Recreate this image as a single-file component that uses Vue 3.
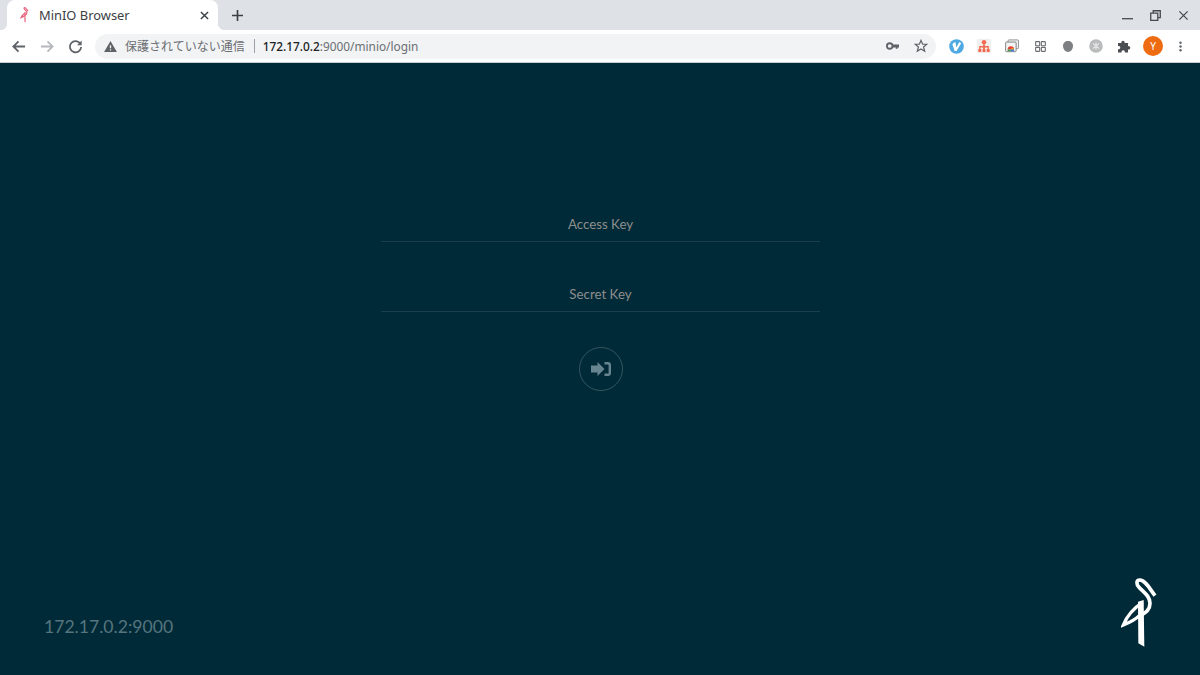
<script setup>
const ui = {
  title: 'MinIO Browser',
  warning: '保護されていない通信',
  host: '172.17.0.2',
  path: ':9000/minio/login',
  endpoint: '172.17.0.2:9000',
}
</script>

<template>
  <div class="screen">
    <header class="tabstrip">
      <div class="tab">
        <svg class="favicon" viewBox="63 36 108 216" fill="none" stroke="#e8647f">
          <path d="M165 92C150 72 135 45 120 45C108 45 108 58 118 68C135 85 150 95 150 115C150 135 138 145 118 152" stroke-width="16" />
          <path d="M128 112C100 130 80 155 70 180C90 172 108 162 118 152" stroke-width="16" />
          <path d="M115 110L131 105L133 245L116 235Z" fill="#e8647f" stroke="none" />
        </svg>
        <span class="tab-title">{{ ui.title }}</span>
        <svg class="tab-close" viewBox="0 0 10 10"><path d="M1 1L9 9M9 1L1 9" /></svg>
      </div>
      <svg class="newtab" viewBox="0 0 12 12"><path d="M6 0V12M0 6H12" /></svg>
      <div class="window-controls">
        <span class="wc"><svg viewBox="0 0 12 12"><path d="M0 9.5H12" /></svg></span>
        <span class="wc"><svg viewBox="0 0 12 12"><path d="M3.5 3V.8H11.2V8.2H9M.8 3.5H8.5V11.2H.8Z" /></svg></span>
        <span class="wc"><svg viewBox="0 0 12 12"><path d="M1.5 1.5L10.5 10.5M10.5 1.5L1.5 10.5" /></svg></span>
      </div>
    </header>

    <nav class="toolbar">
      <span class="btn"><svg class="ico back" viewBox="0 0 16 16"><path d="M15 8H2.5M8 2.5L2.5 8L8 13.5" /></svg></span>
      <span class="btn"><svg class="ico faded" viewBox="0 0 16 16"><path d="M1 8H13.5M8 2.5L13.5 8L8 13.5" /></svg></span>
      <span class="btn"><svg class="ico" viewBox="0 0 16 16"><path d="M13.2 5.2A6 6 0 1 0 14 8.5" /><path class="solid" d="M14.6 1.6V6.6H9.6Z" /></svg></span>

      <div class="omnibox">
        <svg class="warn" viewBox="0 0 14 12"><path d="M7 0L14 12H0ZM6.3 4.5V8H7.7V4.5ZM6.3 9V10.4H7.7V9Z" fill-rule="evenodd" /></svg>
        <span class="warn-text">{{ ui.warning }}</span>
        <span class="sep"></span>
        <span class="url"><b>{{ ui.host }}</b>{{ ui.path }}</span>
        <svg class="keyicon" viewBox="0 0 14 8"><path d="M7 2.5H14V5.5H12.5V7H10.5V5.5H7Z" /><circle cx="4" cy="4" r="3" fill="none" stroke="#5f6368" stroke-width="2" /></svg>
        <svg class="star" viewBox="0 0 16 16"><path d="M8 1.6L9.9 6H14.7L10.9 9.1L12.2 14L8 11.3L3.8 14L5.1 9.1L1.3 6H6.1Z" /></svg>
      </div>

      <span class="btn first-ext">
        <svg class="ext big" viewBox="0 0 16 16"><circle cx="8" cy="8" r="7.8" fill="#4ea9e2" /><path d="M3.6 5.6Q5 3.4 7 3.6L7.8 9L11 3.2L13 4.4L8 12.8H6Z" fill="#fff" /></svg>
      </span>
      <span class="btn">
        <svg class="ext" viewBox="0 0 16 16"><rect width="16" height="16" fill="#f3eeee" rx="1" /><circle cx="8" cy="3.8" r="2.6" fill="#f26a4f" /><path d="M7 6H9V8H13.5V12H12V9.8H9V12H7V9.8H4V12H2.5V8H7Z" fill="#f26a4f" /><rect x="1.5" y="11.5" width="3.4" height="3.4" fill="#f26a4f" /><rect x="6.3" y="11.5" width="3.4" height="3.4" fill="#f26a4f" /><rect x="11.1" y="11.5" width="3.4" height="3.4" fill="#f26a4f" /></svg>
      </span>
      <span class="btn">
        <svg class="ext" viewBox="0 0 16 16"><rect x="3.5" y="1" width="12" height="10" rx="1" fill="#eee" stroke="#888" /><rect x=".7" y="3.5" width="12" height="11" rx="1" fill="#f4f4f4" stroke="#777" /><path d="M3 12A3.7 3.7 0 0 1 10.4 12Z" fill="#e34133" /><path d="M6.7 12A1.8 1.8 0 0 1 10.4 12Z" fill="#f5b400" /><path d="M3 12H6.5V14H3Z" fill="#3f9a4d" /><path d="M6.5 12H10.4V14H6.5Z" fill="#3a78d8" /></svg>
      </span>
      <span class="btn">
        <svg class="ext grid" viewBox="0 0 12 12"><rect x=".7" y=".7" width="4.4" height="4.4" rx=".6" /><rect x="6.9" y=".7" width="4.4" height="4.4" rx=".6" /><rect x=".7" y="6.9" width="4.4" height="4.4" rx=".6" /><rect x="6.9" y="6.9" width="4.4" height="4.4" rx=".6" /></svg>
      </span>
      <span class="btn">
        <svg class="ext small" viewBox="0 0 10 11"><path d="M5 0C8 0 10 2 10 5C10 8 7.5 11 5 11C2.5 11 0 8 0 5C0 2 2 0 5 0Z" fill="#7d7f82" /></svg>
      </span>
      <span class="btn">
        <svg class="ext" viewBox="0 0 14 14"><circle cx="7" cy="7" r="6.8" fill="#b9bbbd" /><path d="M4 4.5L7 7L10 4.5M4 9.5L7 7L10 9.5M7 3.5V10.5" fill="none" stroke="#e4e4e4" stroke-width="1.2" /></svg>
      </span>
      <span class="btn">
        <svg class="ext" viewBox="0 0 14 14"><path d="M1 4H4.4A1.7 1.7 0 1 1 7.6 4H11V7.2A1.7 1.7 0 1 1 11 10.4V13.5H7.8A1.7 1.7 0 1 0 4.6 13.5H1V10.2A1.7 1.7 0 1 0 1 7Z" fill="#4b4f54" /></svg>
      </span>
      <span class="btn"><span class="avatar">Y</span></span>
      <span class="btn">
        <svg class="dots" viewBox="0 0 4 14"><circle cx="2" cy="2" r="1.6" /><circle cx="2" cy="7" r="1.6" /><circle cx="2" cy="12" r="1.6" /></svg>
      </span>
    </nav>

    <main class="page">
      <form class="login" @submit.prevent>
        <input class="field" type="text" placeholder="Access Key" />
        <input class="field" type="password" placeholder="Secret Key" />
        <button class="submit" type="button" aria-label="Sign in">
          <svg viewBox="0 0 20 14" class="signin">
            <path d="M0 3.5H6.5V0L13.5 7L6.5 14V10.5H0Z" fill="#668590" />
            <path d="M13.5 1.2H17Q18.8 1.2 18.8 3V11Q18.8 12.8 17 12.8H13.5" fill="none" stroke="#668590" stroke-width="2.4" />
          </svg>
        </button>
      </form>
      <footer class="foot">
        <span class="endpoint">{{ ui.endpoint }}</span>
        <svg class="logo" viewBox="63 36 108 216" fill="none" stroke="#fff">
          <path d="M165 92C150 72 135 45 120 45C108 45 108 58 118 68C135 85 150 95 150 115C150 135 138 145 118 152" stroke-width="11" />
          <path d="M128 112C100 130 80 155 70 180C90 172 108 162 118 152" stroke-width="10" />
          <path d="M114 110L131 105L133 245L115 235Z" fill="#fff" stroke="none" />
        </svg>
      </footer>
    </main>
  </div>
</template>

<style scoped>
.screen {
  width: 1200px;
  height: 675px;
  display: flex;
  flex-direction: column;
  overflow: hidden;
  font-family: "Noto Sans", "Noto Sans CJK JP", sans-serif;
}
.tabstrip {
  height: 30px;
  flex: none;
  display: flex;
  align-items: center;
  background: #dee1e6;
  padding-left: 7px;
}
.tab {
  position: relative;
  width: 211px;
  height: 30px;
  box-sizing: border-box;
  display: flex;
  align-items: center;
  background: #fff;
  border-radius: 8px 8px 0 0;
  padding: 0 8px 0 13px;
}
.tab::before,
.tab::after {
  content: "";
  position: absolute;
  bottom: 0;
  width: 7px;
  height: 7px;
}
.tab::before {
  left: -7px;
  background: radial-gradient(circle at 0 0, transparent 7px, #fff 7.5px);
}
.tab::after {
  right: -7px;
  background: radial-gradient(circle at 100% 0, transparent 7px, #fff 7.5px);
}
.favicon {
  width: 9px;
  height: 16px;
  flex: none;
}
.tab-title {
  margin-left: 10px;
  font-size: 12.9px;
  color: #3c4043;
  flex: 1;
  white-space: nowrap;
}
.tab-close {
  width: 9px;
  height: 9px;
  margin-right: 1px;
  fill: none;
  stroke: #3c4043;
  stroke-width: 1.6;
}
.newtab {
  width: 11px;
  height: 11px;
  margin-left: 14px;
  fill: none;
  stroke: #3c4043;
  stroke-width: 1.8;
}
.window-controls {
  margin-left: auto;
  margin-right: 3px;
  display: flex;
}
.wc {
  width: 28px;
  height: 30px;
  display: flex;
  align-items: center;
  justify-content: center;
}
.wc svg {
  width: 11px;
  height: 11px;
  fill: none;
  stroke: #45484c;
  stroke-width: 1.4;
}
.toolbar {
  height: 33px;
  flex: none;
  box-sizing: border-box;
  display: flex;
  align-items: center;
  padding: 0 5px;
  background: #fff;
  border-bottom: 1px solid #c9ccd0;
}
.btn {
  width: 28px;
  height: 28px;
  flex: none;
  display: flex;
  align-items: center;
  justify-content: center;
}
.first-ext {
  margin-left: 6px;
}
.ico {
  width: 15px;
  height: 15px;
  fill: none;
  stroke: #5f6368;
  stroke-width: 1.9;
}
.ico.back {
  margin-right: 1px;
}
.ico.faded {
  stroke: #b6b8bb;
}
.ico .solid {
  fill: #5f6368;
  stroke: none;
}
.omnibox {
  width: 841px;
  height: 25px;
  flex: none;
  margin-left: 6px;
  box-sizing: border-box;
  display: flex;
  align-items: center;
  padding-left: 9px;
  background: #f1f3f4;
  border-radius: 13px;
}
.warn {
  width: 13px;
  height: 11px;
  fill: #5f6368;
  flex: none;
}
.warn-text {
  margin-left: 8px;
  font-size: 12px;
  color: #6b6e72;
  white-space: nowrap;
}
.sep {
  width: 1px;
  height: 14px;
  margin: 0 8px 0 9px;
  background: #9aa0a6;
}
.url {
  font-size: 11.85px;
  color: #6b6e72;
  white-space: nowrap;
}
.url b {
  font-weight: 500;
  color: #202124;
}
.keyicon {
  width: 13px;
  height: 8px;
  margin-left: auto;
  fill: #5f6368;
}
.star {
  width: 14px;
  height: 14px;
  margin: 0 8px 0 15px;
  fill: none;
  stroke: #5f6368;
  stroke-width: 1.4;
}
.ext {
  width: 14px;
  height: 14px;
}
.ext.big {
  width: 15px;
  height: 15px;
}
.ext.grid {
  width: 11px;
  height: 11px;
  fill: none;
  stroke: #6a6c70;
  stroke-width: 1.2;
}
.ext.small {
  width: 10px;
  height: 11px;
}
.avatar {
  width: 20px;
  height: 20px;
  margin-left: 2px;
  border-radius: 50%;
  background: #ee6b12;
  color: #fff;
  font-size: 10px;
  line-height: 20px;
  text-align: center;
}
.dots {
  width: 3px;
  height: 11px;
  fill: #5f6368;
}
.page {
  flex: 1;
  display: flex;
  flex-direction: column;
  background: #002a37;
  font-family: Lato, sans-serif;
}
.login {
  width: 439px;
  margin: 144px 0 0 381px;
  display: flex;
  flex-direction: column;
  align-items: center;
  gap: 35px;
}
.field {
  width: 100%;
  height: 35px;
  box-sizing: border-box;
  background: transparent;
  border: 0;
  border-bottom: 1px solid rgba(255, 255, 255, 0.1);
  outline: none;
  padding: 0;
  font-family: inherit;
  font-size: 13.3px;
  text-align: center;
  color: #fff;
}
.field::placeholder {
  color: #8e8e8e;
  opacity: 1;
}
.submit {
  width: 44px;
  height: 44px;
  padding: 0;
  display: flex;
  align-items: center;
  justify-content: center;
  background: transparent;
  border: 1px solid rgba(255, 255, 255, 0.2);
  border-radius: 50%;
}
.signin {
  width: 20px;
  height: 14px;
}
.foot {
  margin-top: auto;
  display: flex;
  align-items: flex-end;
  justify-content: space-between;
  padding: 0 43px 26px 44px;
}
.endpoint {
  font-size: 17.6px;
  margin-bottom: 12px;
  color: #56757f;
}
.logo {
  width: 36px;
  height: 72px;
}
</style>
